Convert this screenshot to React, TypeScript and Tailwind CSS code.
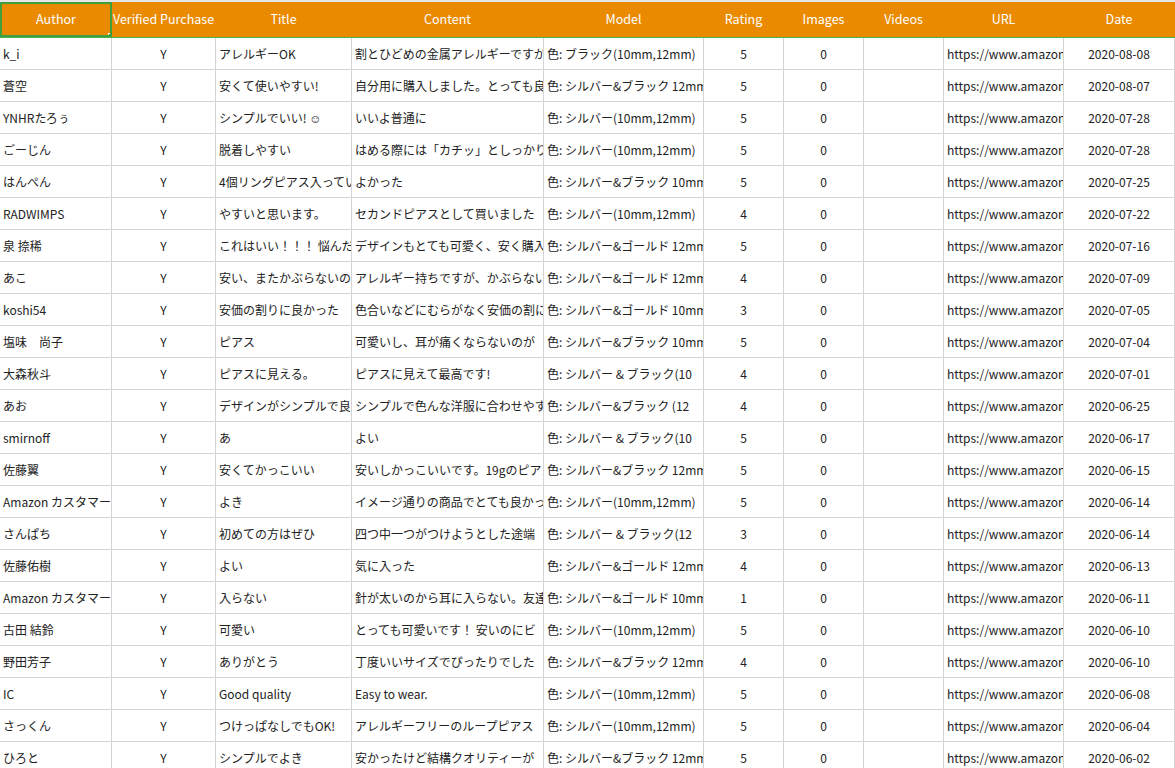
const cols = [
  { name: "Author", w: 112, align: "left" },
  { name: "Verified Purchase", w: 104, align: "center" },
  { name: "Title", w: 136, align: "left" },
  { name: "Content", w: 192, align: "left" },
  { name: "Model", w: 160, align: "left" },
  { name: "Rating", w: 80, align: "center" },
  { name: "Images", w: 80, align: "center" },
  { name: "Videos", w: 80, align: "center" },
  { name: "URL", w: 120, align: "left" },
  { name: "Date", w: 111, align: "center" },
];

const rows: [string, string, string, string, string, string][] = [
  ["k_i", "アレルギーOK", "割とひどめの金属アレルギーですが", "色: ブラック(10mm,12mm)", "5", "2020-08-08"],
  ["蒼空", "安くて使いやすい!", "自分用に購入しました。とっても良い", "色: シルバー&ブラック 12mm", "5", "2020-08-07"],
  ["YNHRたろぅ", "シンプルでいい! ☺", "いいよ普通に", "色: シルバー(10mm,12mm)", "5", "2020-07-28"],
  ["ごーじん", "脱着しやすい", "はめる際には「カチッ」としっかり", "色: シルバー(10mm,12mm)", "5", "2020-07-28"],
  ["はんぺん", "4個リングピアス入っているのに", "よかった", "色: シルバー&ブラック 10mm", "5", "2020-07-25"],
  ["RADWIMPS", "やすいと思います。", "セカンドピアスとして買いました", "色: シルバー(10mm,12mm)", "4", "2020-07-22"],
  ["泉 捺稀", "これはいい！！！ 悩んだ", "デザインもとても可愛く、安く購入", "色: シルバー&ゴールド 12mm", "5", "2020-07-16"],
  ["あこ", "安い、またかぶらないのに", "アレルギー持ちですが、かぶらない", "色: シルバー&ゴールド 12mm", "4", "2020-07-09"],
  ["koshi54", "安価の割りに良かった", "色合いなどにむらがなく安価の割に", "色: シルバー&ゴールド 10mm", "3", "2020-07-05"],
  ["塩味　尚子", "ピアス", "可愛いし、耳が痛くならないのが", "色: シルバー&ブラック 10mm", "5", "2020-07-04"],
  ["大森秋斗", "ピアスに見える。", "ピアスに見えて最高です!", "色: シルバー & ブラック(10", "4", "2020-07-01"],
  ["あお", "デザインがシンプルで良い", "シンプルで色んな洋服に合わせやすい", "色: シルバー&ブラック (12", "4", "2020-06-25"],
  ["smirnoff", "あ", "よい", "色: シルバー & ブラック(10", "5", "2020-06-17"],
  ["佐藤翼", "安くてかっこいい", "安いしかっこいいです。19gのピアス", "色: シルバー&ブラック 12mm", "5", "2020-06-15"],
  ["Amazon カスタマー", "よき", "イメージ通りの商品でとても良かった", "色: シルバー(10mm,12mm)", "5", "2020-06-14"],
  ["さんぱち", "初めての方はぜひ", "四つ中一つがつけようとした途端", "色: シルバー & ブラック(12", "3", "2020-06-14"],
  ["佐藤佑樹", "よい", "気に入った", "色: シルバー&ゴールド 12mm", "4", "2020-06-13"],
  ["Amazon カスタマー", "入らない", "針が太いのから耳に入らない。友達", "色: シルバー&ゴールド 10mm", "1", "2020-06-11"],
  ["古田 結鈴", "可愛い", "とっても可愛いです！ 安いのにビ", "色: シルバー(10mm,12mm)", "5", "2020-06-10"],
  ["野田芳子", "ありがとう", "丁度いいサイズでぴったりでした", "色: シルバー&ブラック 12mm", "4", "2020-06-10"],
  ["IC", "Good quality", "Easy to wear.", "色: シルバー(10mm,12mm)", "5", "2020-06-08"],
  ["さっくん", "つけっぱなしでもOK!", "アレルギーフリーのループピアス", "色: シルバー(10mm,12mm)", "5", "2020-06-04"],
  ["ひろと", "シンプルでよき", "安かったけど結構クオリティーが", "色: シルバー&ブラック 12mm", "5", "2020-06-02"],
];

export default function App() {
  const font = { fontFamily: '"Noto Sans CJK JP", "Noto Sans", sans-serif' };
  return (
    <div className="w-[1175px] h-[768px] overflow-hidden bg-white text-[12px] text-[#222]" style={font}>
      <div className="flex h-[2px] bg-[#e6e6e6]" />
      <div className="flex h-[36px] bg-[#e98a00] border-b border-[#4caf50]">
        {cols.map((c, i) => (
          <div
            key={c.name}
            style={{ width: c.w }}
            className={`shrink-0 flex items-center justify-center text-white text-[12.5px] whitespace-nowrap overflow-hidden ${i === 0 ? "border-2 border-[#3f9f3f] relative" : "border-r border-[#e98a00]"}`}
          >
            {c.name}
            {i === 0 && <div className="absolute -right-[3px] -bottom-[3px] w-[5px] h-[5px] bg-[#3f9f3f] border border-white" />}
          </div>
        ))}
      </div>
      {rows.map((r, ri) => {
        const cells = [r[0], "Y", r[1], r[2], r[3], r[4], "0", "", "https://www.amazon.co.jp/", r[5]];
        return (
          <div key={ri} className="flex h-[32px] border-b border-[#d4d4d4]">
            {cells.map((v, ci) => (
              <div
                key={ci}
                style={{ width: cols[ci].w }}
                className={`shrink-0 flex items-center px-[3px] whitespace-nowrap overflow-hidden border-r border-[#d4d4d4] ${cols[ci].align === "center" ? "justify-center" : ""}`}
              >
                {v}
              </div>
            ))}
          </div>
        );
      })}
    </div>
  );
}
